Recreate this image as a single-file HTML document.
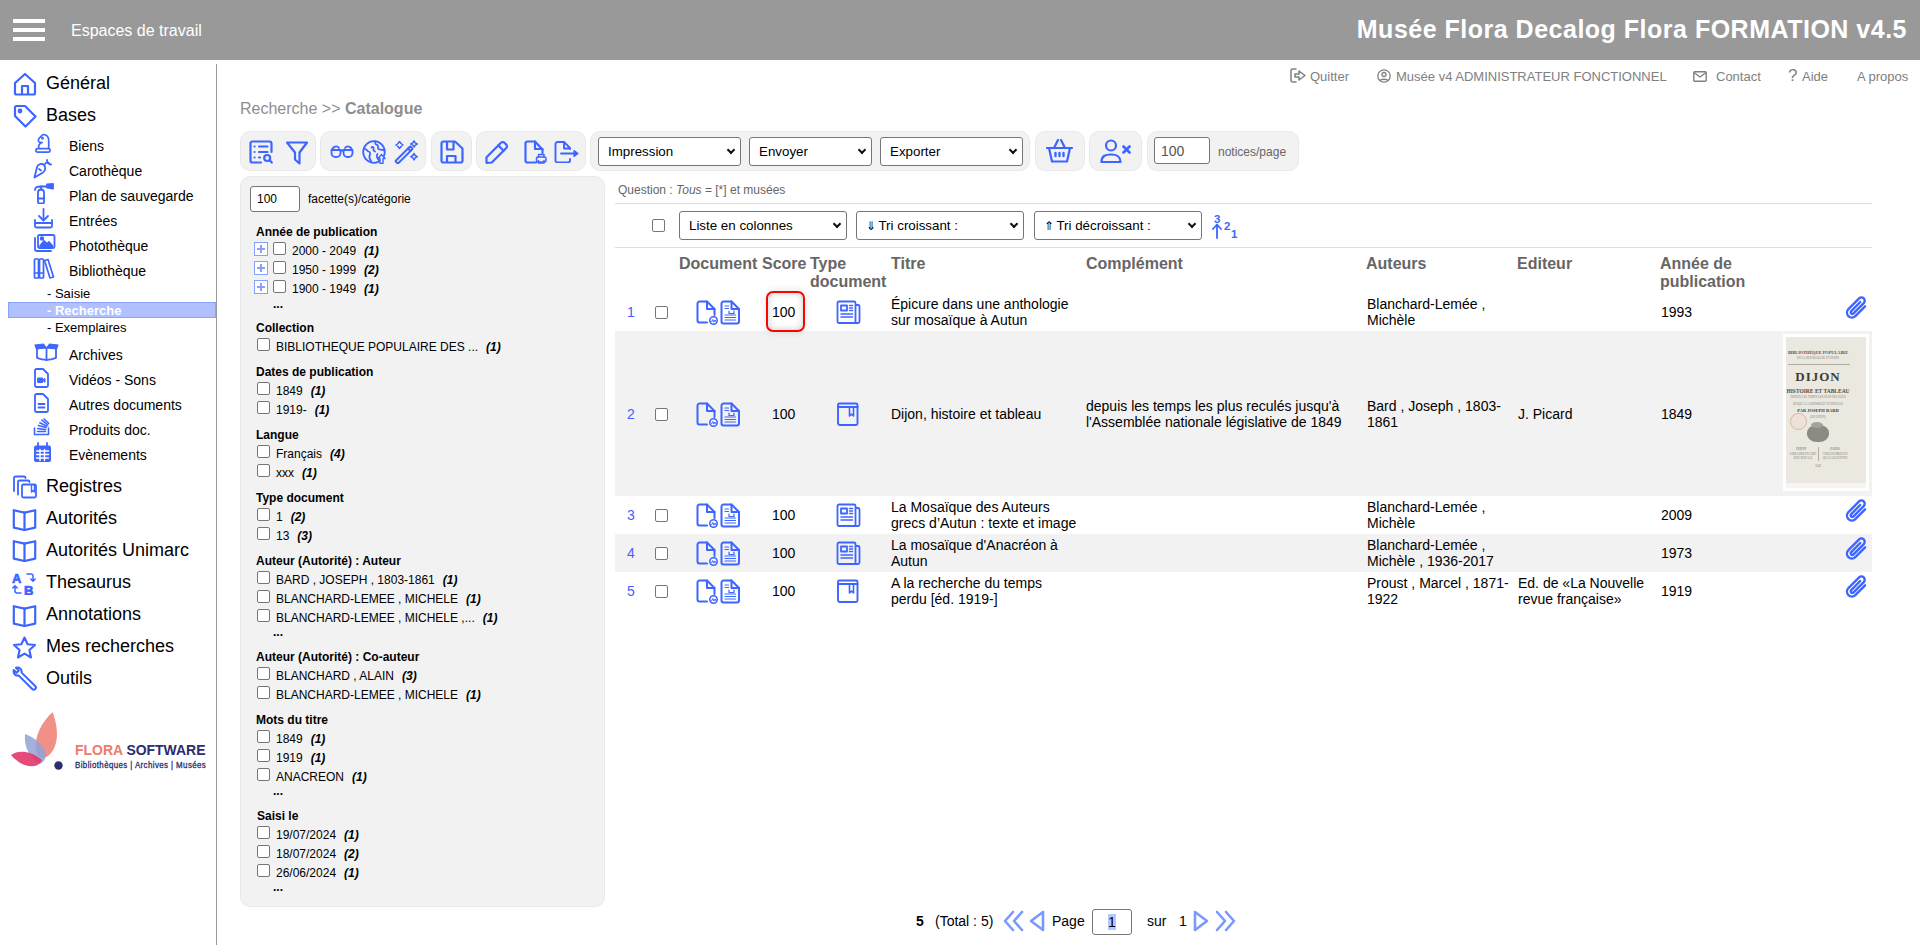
<!DOCTYPE html>
<html lang="fr"><head><meta charset="utf-8">
<style>
*{box-sizing:border-box;margin:0;padding:0}
html,body{width:1920px;height:945px;overflow:hidden;background:#fff;font-family:"Liberation Sans",sans-serif;color:#000}
.a{position:absolute}
svg.i{position:absolute;fill:none;stroke:#3d65ff;stroke-width:2;stroke-linecap:round;stroke-linejoin:round}
#hdr{position:absolute;left:0;top:0;width:1920px;height:60px;background:#999}
.bar{position:absolute;left:13px;width:32px;height:4px;background:#fff}
#side{position:absolute;left:0;top:60px;width:217px;height:885px}
#vline{position:absolute;left:216px;top:64px;width:1px;height:881px;background:#999}
.n1{position:absolute;left:46px;font-size:18px;white-space:nowrap}
.n2{position:absolute;left:69px;font-size:14px;white-space:nowrap}
.n3{position:absolute;left:47px;font-size:13px;white-space:nowrap}
.tl{position:absolute;top:69px;font-size:13px;color:#808080;white-space:nowrap}
.grp{position:absolute;top:131px;height:40px;background:#f2f2f2;border:1px solid #e9e9e9;border-radius:10px}
.sel{position:absolute;height:29px;border:1px solid #767676;border-radius:3px;background:#fff;font-size:13.333px;padding-left:9px;line-height:28px;white-space:nowrap}
.sel:after{content:"";position:absolute;right:6px;top:9px;width:6px;height:6px;box-sizing:border-box;border-right:2.4px solid #111;border-bottom:2.4px solid #111;transform:rotate(45deg)}
.inp{position:absolute;border:1px solid #767676;border-radius:3px;background:#fff;font-size:14px}
#facets{position:absolute;left:240px;top:176px;width:365px;height:731px;background:#f2f2f2;border:1px solid #e9e9e9;border-radius:10px}
.fh{position:absolute;left:256px;font-size:12px;font-weight:bold;white-space:nowrap}
.fi{position:absolute;font-size:12px;white-space:nowrap}
.fi i{font-weight:bold;margin-left:8px}
.cb{position:absolute;width:13px;height:13px;border:1px solid #767676;border-radius:2px;background:#fff}
.pl{position:absolute;width:14px;height:14px;border:1px solid #8aa0ff;background:#fff}
.pl:before{content:"";position:absolute;left:5px;top:2px;width:2px;height:8px;background:#8aa0ff}
.pl:after{content:"";position:absolute;left:2px;top:5px;width:8px;height:2px;background:#8aa0ff}

.hr{position:absolute;left:615px;width:1257px;height:1px;background:#e0e0e0}
.th{position:absolute;top:255px;font-size:16px;font-weight:bold;color:#666;line-height:18px;white-space:nowrap}
.td{position:absolute;font-size:14px;line-height:16px;white-space:nowrap}
.num{position:absolute;font-size:14px;color:#4b5cff;white-space:nowrap}
.band{position:absolute;left:615px;width:1257px;background:#f2f2f2}
</style></head><body>
<div id="hdr">
  <div class="bar" style="top:19px"></div><div class="bar" style="top:28px"></div><div class="bar" style="top:37px"></div>
  <div class="a" style="left:71px;top:22px;font-size:16px;color:#fff;white-space:nowrap">Espaces de travail</div>
  <div class="a" style="right:13px;top:15px;font-size:25px;font-weight:bold;color:#fff;white-space:nowrap;letter-spacing:0.5px">Musée Flora Decalog Flora FORMATION v4.5</div>
</div>
<div id="vline"></div>

<!-- sidebar -->
<div class="n1" style="top:73px">Général</div>
<div class="n1" style="top:105px">Bases</div>
<div class="n2" style="top:138px">Biens</div>
<div class="n2" style="top:163px">Carothèque</div>
<div class="n2" style="top:188px">Plan de sauvegarde</div>
<div class="n2" style="top:213px">Entrées</div>
<div class="n2" style="top:238px">Photothèque</div>
<div class="n2" style="top:263px">Bibliothèque</div>
<div class="n3" style="top:286px">- Saisie</div>
<div class="a" style="left:8px;top:302px;width:208px;height:16px;background:#b1c0ff;border:1px solid #8da2ff"></div>
<div class="n3" style="top:303px;color:#fff;font-weight:bold">- Recherche</div>
<div class="n3" style="top:320px">- Exemplaires</div>
<div class="n2" style="top:347px">Archives</div>
<div class="n2" style="top:372px">Vidéos - Sons</div>
<div class="n2" style="top:397px">Autres documents</div>
<div class="n2" style="top:422px">Produits doc.</div>
<div class="n2" style="top:447px">Evènements</div>
<div class="n1" style="top:476px">Registres</div>
<div class="n1" style="top:508px">Autorités</div>
<div class="n1" style="top:540px">Autorités Unimarc</div>
<div class="n1" style="top:572px">Thesaurus</div>
<div class="n1" style="top:604px">Annotations</div>
<div class="n1" style="top:636px">Mes recherches</div>
<div class="n1" style="top:668px">Outils</div>

<!-- top links -->
<div class="tl" style="left:1310px">Quitter</div>
<div class="tl" style="left:1396px">Musée v4 ADMINISTRATEUR FONCTIONNEL</div>
<div class="tl" style="left:1716px">Contact</div>
<div class="tl" style="left:1802px">Aide</div>
<div class="tl" style="left:1857px">A propos</div>

<div class="a" style="left:240px;top:100px;font-size:16px;color:#8e8e8e;white-space:nowrap">Recherche &gt;&gt; <b>Catalogue</b></div>

<!-- toolbar -->
<div class="grp" style="left:240px;width:76px"></div>
<div class="grp" style="left:320px;width:106px"></div>
<div class="grp" style="left:431px;width:41px"></div>
<div class="grp" style="left:476px;width:110px"></div>
<div class="grp" style="left:590px;width:440px"></div>
<div class="grp" style="left:1035px;width:50px"></div>
<div class="grp" style="left:1089px;width:53px"></div>
<div class="grp" style="left:1147px;width:152px"></div>
<div class="sel" style="left:598px;top:137px;width:143px">Impression</div>
<div class="sel" style="left:749px;top:137px;width:123px">Envoyer</div>
<div class="sel" style="left:880px;top:137px;width:143px">Exporter</div>
<div class="inp" style="left:1154px;top:137px;width:56px;height:27px;padding-left:6px;line-height:26px;color:#555">100</div>
<div class="a" style="left:1218px;top:145px;font-size:12px;color:#666">notices/page</div>

<!-- facets -->
<div id="facets"></div>

<!-- facets content -->
<div class="inp" style="left:250px;top:186px;width:50px;height:26px;padding-left:6px;line-height:24px;font-size:12px">100</div>
<div class="fi" style="left:308px;top:192px">facette(s)/catégorie</div>
<div class="fh" style="top:225px">Année de publication</div>
<div class="pl" style="left:254px;top:242px"></div>
<div class="cb" style="left:273px;top:242px"></div>
<div class="fi" style="left:292px;top:244px">2000 - 2049<i>(1)</i></div>
<div class="pl" style="left:254px;top:261px"></div>
<div class="cb" style="left:273px;top:261px"></div>
<div class="fi" style="left:292px;top:263px">1950 - 1999<i>(2)</i></div>
<div class="pl" style="left:254px;top:280px"></div>
<div class="cb" style="left:273px;top:280px"></div>
<div class="fi" style="left:292px;top:282px">1900 - 1949<i>(1)</i></div>
<div class="fi" style="left:273px;top:297px;font-weight:bold">...</div>
<div class="fh" style="top:321px">Collection</div>
<div class="cb" style="left:257px;top:338px"></div>
<div class="fi" style="left:276px;top:340px">BIBLIOTHEQUE POPULAIRE DES ...<i>(1)</i></div>
<div class="fh" style="top:365px">Dates de publication</div>
<div class="cb" style="left:257px;top:382px"></div>
<div class="fi" style="left:276px;top:384px">1849<i>(1)</i></div>
<div class="cb" style="left:257px;top:401px"></div>
<div class="fi" style="left:276px;top:403px">1919-<i>(1)</i></div>
<div class="fh" style="top:428px">Langue</div>
<div class="cb" style="left:257px;top:445px"></div>
<div class="fi" style="left:276px;top:447px">Français<i>(4)</i></div>
<div class="cb" style="left:257px;top:464px"></div>
<div class="fi" style="left:276px;top:466px">xxx<i>(1)</i></div>
<div class="fh" style="top:491px">Type document</div>
<div class="cb" style="left:257px;top:508px"></div>
<div class="fi" style="left:276px;top:510px">1<i>(2)</i></div>
<div class="cb" style="left:257px;top:527px"></div>
<div class="fi" style="left:276px;top:529px">13<i>(3)</i></div>
<div class="fh" style="top:554px">Auteur (Autorité) : Auteur</div>
<div class="cb" style="left:257px;top:571px"></div>
<div class="fi" style="left:276px;top:573px">BARD , JOSEPH , 1803-1861<i>(1)</i></div>
<div class="cb" style="left:257px;top:590px"></div>
<div class="fi" style="left:276px;top:592px">BLANCHARD-LEMEE , MICHELE<i>(1)</i></div>
<div class="cb" style="left:257px;top:609px"></div>
<div class="fi" style="left:276px;top:611px">BLANCHARD-LEMEE , MICHELE ,...<i>(1)</i></div>
<div class="fi" style="left:273px;top:625px;font-weight:bold">...</div>
<div class="fh" style="top:650px">Auteur (Autorité) : Co-auteur</div>
<div class="cb" style="left:257px;top:667px"></div>
<div class="fi" style="left:276px;top:669px">BLANCHARD , ALAIN<i>(3)</i></div>
<div class="cb" style="left:257px;top:686px"></div>
<div class="fi" style="left:276px;top:688px">BLANCHARD-LEMEE , MICHELE<i>(1)</i></div>
<div class="fh" style="top:713px">Mots du titre</div>
<div class="cb" style="left:257px;top:730px"></div>
<div class="fi" style="left:276px;top:732px">1849<i>(1)</i></div>
<div class="cb" style="left:257px;top:749px"></div>
<div class="fi" style="left:276px;top:751px">1919<i>(1)</i></div>
<div class="cb" style="left:257px;top:768px"></div>
<div class="fi" style="left:276px;top:770px">ANACREON<i>(1)</i></div>
<div class="fi" style="left:273px;top:784px;font-weight:bold">...</div>
<div class="fh" style="top:809px;left:257px">Saisi le</div>
<div class="cb" style="left:257px;top:826px"></div>
<div class="fi" style="left:276px;top:828px">19/07/2024<i>(1)</i></div>
<div class="cb" style="left:257px;top:845px"></div>
<div class="fi" style="left:276px;top:847px">18/07/2024<i>(2)</i></div>
<div class="cb" style="left:257px;top:864px"></div>
<div class="fi" style="left:276px;top:866px">26/06/2024<i>(1)</i></div>
<div class="fi" style="left:273px;top:880px;font-weight:bold">...</div>

<!-- results -->
<div class="a" style="left:618px;top:183px;font-size:12px;color:#666;white-space:nowrap">Question : <i>Tous</i> = [*] et musées</div>
<div class="hr" style="top:203px"></div>
<div class="cb" style="left:652px;top:219px"></div>
<div class="sel" style="left:679px;top:211px;width:168px;height:29px">Liste en colonnes</div>
<div class="sel" style="left:856px;top:211px;width:168px;height:29px"><span style="display:inline-block;width:9px;font-size:12px">⇓</span> Tri croissant :</div>
<div class="sel" style="left:1034px;top:211px;width:168px;height:29px"><span style="display:inline-block;width:9px;font-size:12px">⇑</span> Tri décroissant :</div>
<div class="hr" style="top:247px"></div>
<div class="th" style="left:679px">Document</div>
<div class="th" style="left:762px">Score</div>
<div class="th" style="left:810px">Type<br>document</div>
<div class="th" style="left:891px">Titre</div>
<div class="th" style="left:1086px">Complément</div>
<div class="th" style="left:1366px">Auteurs</div>
<div class="th" style="left:1517px">Editeur</div>
<div class="th" style="left:1660px">Année de<br>publication</div>

<div class="band" style="top:331px;height:165px"></div>
<div class="band" style="top:534px;height:38px"></div>
<div class="num" style="left:627px;top:304px">1</div>
<div class="cb" style="left:655px;top:306px"></div>
<div class="td" style="left:772px;top:304px">100</div>
<div class="td" style="left:891px;top:296px">Épicure dans une anthologie<br>sur mosaïque à Autun</div>
<div class="td" style="left:1367px;top:296px">Blanchard-Lemée ,<br>Michèle</div>
<div class="td" style="left:1661px;top:304px">1993</div>
<div class="num" style="left:627px;top:406px">2</div>
<div class="cb" style="left:655px;top:408px"></div>
<div class="td" style="left:772px;top:406px">100</div>
<div class="td" style="left:891px;top:406px">Dijon, histoire et tableau</div>
<div class="td" style="left:1086px;top:398px">depuis les temps les plus reculés jusqu'à<br>l'Assemblée nationale législative de 1849</div>
<div class="td" style="left:1367px;top:398px">Bard , Joseph , 1803-<br>1861</div>
<div class="td" style="left:1518px;top:406px">J. Picard</div>
<div class="td" style="left:1661px;top:406px">1849</div>
<div class="num" style="left:627px;top:507px">3</div>
<div class="cb" style="left:655px;top:509px"></div>
<div class="td" style="left:772px;top:507px">100</div>
<div class="td" style="left:891px;top:499px">La Mosaïque des Auteurs<br>grecs d’Autun : texte et image</div>
<div class="td" style="left:1367px;top:499px">Blanchard-Lemée ,<br>Michèle</div>
<div class="td" style="left:1661px;top:507px">2009</div>
<div class="num" style="left:627px;top:545px">4</div>
<div class="cb" style="left:655px;top:547px"></div>
<div class="td" style="left:772px;top:545px">100</div>
<div class="td" style="left:891px;top:537px">La mosaïque d'Anacréon à<br>Autun</div>
<div class="td" style="left:1367px;top:537px">Blanchard-Lemée ,<br>Michèle , 1936-2017</div>
<div class="td" style="left:1661px;top:545px">1973</div>
<div class="num" style="left:627px;top:583px">5</div>
<div class="cb" style="left:655px;top:585px"></div>
<div class="td" style="left:772px;top:583px">100</div>
<div class="td" style="left:891px;top:575px">A la recherche du temps<br>perdu [éd. 1919-]</div>
<div class="td" style="left:1367px;top:575px">Proust , Marcel , 1871-<br>1922</div>
<div class="td" style="left:1518px;top:575px">Ed. de «La Nouvelle<br>revue française»</div>
<div class="td" style="left:1661px;top:583px">1919</div>

<!-- score box -->
<div class="a" style="left:766px;top:291px;width:39px;height:41px;border:2px solid #ff0000;border-radius:7px;box-shadow:0 0 8px rgba(0,0,0,0.12),inset 0 0 7px rgba(0,0,0,0.22)"></div>
<!-- sort icon -->
<div class="a" style="left:1214px;top:214px;font-size:11.5px;font-weight:bold;color:#3d65ff;line-height:11px">3</div>
<div class="a" style="left:1224px;top:221px;font-size:11.5px;font-weight:bold;color:#3d65ff;line-height:11px">2</div>
<div class="a" style="left:1231px;top:229px;font-size:11.5px;font-weight:bold;color:#3d65ff;line-height:11px">1</div>
<svg class="i" style="left:1212px;top:223px;width:10px;height:16px;stroke-width:1.8" viewBox="0 0 10 16"><path d="M5 15 V2 M1 6 L5 1.5 L9 6"/></svg>
<!-- thumbnail -->
<div class="a" style="left:1783px;top:334px;width:86px;height:157px;background:#fff"></div>
<div class="a" style="left:1786px;top:337px;width:80px;height:151px;background:#ebe8e0;overflow:hidden;font-family:'Liberation Serif',serif;color:#55524c;text-align:center;white-space:nowrap">
  <div class="a" style="left:0;top:13px;width:64px;font-size:4.3px;font-weight:bold;line-height:6px">BIBLIOTHÈQUE POPULAIRE</div>
  <div class="a" style="left:0;top:19px;width:64px;font-size:3px;line-height:4px;color:#8a877f">DE LA BOURGOGNE ET DIJON</div>
  <div class="a" style="left:2px;top:27px;width:62px;height:1px;background:#b0ada5"></div>
  <div class="a" style="left:0;top:33px;width:64px;font-size:13px;font-weight:bold;letter-spacing:1px;color:#3e3c37;line-height:14px">DIJON</div>
  <div class="a" style="left:0;top:51px;width:64px;font-size:5.5px;font-weight:bold;line-height:6px;color:#4e4b45">HISTOIRE ET TABLEAU</div>
  <div class="a" style="left:0;top:58px;width:64px;font-size:3px;line-height:4px;color:#8a877f">DEPUIS LES TEMPS LES PLUS RECULÉS</div>
  <div class="a" style="left:0;top:65px;width:64px;font-size:3px;line-height:4px;color:#8a877f">JUSQU'A L'ASSEMBLÉE NATIONALE</div>
  <div class="a" style="left:0;top:71px;width:64px;font-size:4.5px;font-weight:bold;line-height:5px;color:#3e3c37">PAR JOSEPH BARD</div>
  <div class="a" style="left:0;top:78px;width:64px;font-size:3px;line-height:4px;color:#8a877f">(DE DIJON)</div>
  <div class="a" style="left:4px;top:76px;width:17px;height:17px;border-radius:50%;border:1px solid #dcb3ad;background:#ece2d9"></div>
  <div class="a" style="left:21px;top:88px;width:22px;height:17px;border-radius:45%;background:#8c8a83"></div>
  <div class="a" style="left:25px;top:85px;width:12px;height:6px;border-radius:50%;background:#a3a19a"></div>
  <div class="a" style="left:0;top:110px;width:30px;font-size:3.5px;line-height:4px;color:#6a675f">DIJON</div>
  <div class="a" style="left:34px;top:110px;width:30px;font-size:3.5px;line-height:4px;color:#6a675f">PARIS</div>
  <div class="a" style="left:2px;top:115px;width:30px;font-size:3px;line-height:4px;color:#8a877f">LIBRAIRIE PICARD</div>
  <div class="a" style="left:34px;top:115px;width:30px;font-size:3px;line-height:4px;color:#8a877f">CHEZ DUMOULIN</div>
  <div class="a" style="left:2px;top:119px;width:30px;font-size:3px;line-height:4px;color:#8a877f">RUE ROYALE</div>
  <div class="a" style="left:34px;top:119px;width:30px;font-size:3px;line-height:4px;color:#8a877f">QUAI AUGUSTINS</div>
  <div class="a" style="left:32px;top:110px;width:1px;height:14px;background:#aeaba3"></div>
  <div class="a" style="left:0;top:127px;width:64px;font-size:3px;line-height:4px;color:#8a877f">1849</div>
  <div class="a" style="left:0;top:146px;width:80px;height:5px;background:#f6f5f1"></div>
</div>
<!-- pagination -->
<div class="a" style="left:916px;top:913px;font-size:14px;font-weight:bold">5</div>
<div class="a" style="left:935px;top:913px;font-size:14px;white-space:nowrap">(Total : 5)</div>
<svg class="i" style="left:1003px;top:910px;width:22px;height:22px;stroke:#7b98ff;stroke-width:2.6" viewBox="0 0 22 22"><path d="M10 2 L2 11 L10 20 M19 2 L11 11 L19 20"/></svg>
<svg class="i" style="left:1029px;top:910px;width:16px;height:22px;stroke:#7b98ff;stroke-width:2.6" viewBox="0 0 16 22"><path d="M14 2 V20 L2 11 Z"/></svg>
<div class="a" style="left:1052px;top:913px;font-size:14px">Page</div>
<div class="inp" style="left:1092px;top:909px;width:40px;height:26px;text-align:center;line-height:24px"><span style="background:#b3c8ff">1</span></div>
<div class="a" style="left:1147px;top:913px;font-size:14px">sur</div>
<div class="a" style="left:1179px;top:913px;font-size:14px">1</div>
<svg class="i" style="left:1193px;top:910px;width:16px;height:22px;stroke:#7b98ff;stroke-width:2.6" viewBox="0 0 16 22"><path d="M2 2 V20 L14 11 Z"/></svg>
<svg class="i" style="left:1214px;top:910px;width:22px;height:22px;stroke:#7b98ff;stroke-width:2.6" viewBox="0 0 22 22"><path d="M3 2 L11 11 L3 20 M12 2 L20 11 L12 20"/></svg>
<!-- logo -->
<svg style="position:absolute;left:8px;top:708px;width:60px;height:64px" viewBox="0 0 60 64">
  <path d="M44.5 4 C34 14 26 28 28 42 C29 50 34 52 40 48 C50 40 52 24 44.5 4 Z" fill="#ef8a80" opacity="0.95"/>
  <path d="M17 26 C16 38 20 48 32 56 C40 52 40 42 30 34 C26 30 22 28 17 26 Z" fill="#8fa3d6" opacity="0.85"/>
  <path d="M3 47 C10 42 22 42 34 52 C30 62 14 60 3 47 Z" fill="#e2366a" opacity="0.9"/>
  <circle cx="50.5" cy="57.5" r="4.2" fill="#2b2d6e"/>
</svg>
<div class="a" style="left:75px;top:741px;font-size:15px;font-weight:bold;white-space:nowrap;transform:scaleX(0.93);transform-origin:0 0"><span style="color:#ef7a70">FLORA</span> <span style="color:#2b2d6e">SOFTWARE</span></div>
<div class="a" style="left:75px;top:760px;font-size:9px;font-weight:normal;color:#2b2d6e;white-space:nowrap;-webkit-text-stroke:0.3px #2b2d6e;letter-spacing:0.45px;transform:scaleX(0.88);transform-origin:0 0">Bibliothèques | Archives | Musées</div>
<!--ICONS-->
<svg class="i" style="left:13px;top:72px;width:24px;height:24px;stroke-width:2.2" viewBox="0 0 24 24"><path d="M2 11 L12 2 L22 11 V21 a1.5 1.5 0 0 1 -1.5 1.5 H3.5 A1.5 1.5 0 0 1 2 21 Z"/><path d="M9 22 V14 H15 V22"/></svg>
<svg class="i" style="left:13px;top:104px;width:24px;height:24px;stroke-width:2.2" viewBox="0 0 24 24"><path d="M2 3.5 a1.5 1.5 0 0 1 1.5 -1.5 H12 L22.5 12.5 L12.5 22.5 L2 12 Z"/><circle cx="7" cy="7" r="1.3"/></svg>
<svg class="i" style="left:34px;top:133px;width:18px;height:21px;stroke-width:1.8" viewBox="0 0 19 21"><path d="M5 15 C4.5 12.5 6 10.5 8.5 9.5 L5.5 9 C4.5 8.5 4.5 6.5 5 5.5 L8 2.5 C8.5 1.5 9 1 10 1 C13.5 1.2 15.5 4 15.5 7.5 V15"/><circle cx="9" cy="5" r="0.6" fill="#3d65ff"/><rect x="2" y="16" width="15" height="3.5" rx="1.7"/></svg>
<svg class="i" style="left:33px;top:158px;width:21px;height:21px;stroke-width:1.8" viewBox="0 0 21 21"><path d="M1.5 19.5 L4 9 C5 6 9 5 11 7 C13 9 12.5 13 10 14.5 Z"/><path d="M6 11 L8 12.5"/><path d="M14 2 C14 4 15 6 18 6.5" /><path d="M12 6 C13 4.5 14.5 4 16 5"/></svg>
<svg class="i" style="left:33px;top:183px;width:21px;height:21px;stroke-width:1.8" viewBox="0 0 21 21"><path d="M5 19 V9.5 a3 3 0 0 1 6 0 V19 a1.5 1.5 0 0 1 -1.5 1.5 h-3 A1.5 1.5 0 0 1 5 19 Z"/><path d="M5 15.5 H11"/><path d="M8 6.5 V3.5 H14"/><path d="M2 7 C2 4.5 4 3.5 8 3.5"/><path d="M14 1.5 L20 1 V5.5 L14 4.5 Z" fill="#3d65ff"/></svg>
<svg class="i" style="left:33px;top:208px;width:21px;height:21px;stroke-width:1.8" viewBox="0 0 21 21"><path d="M10.5 1 V12"/><path d="M6 8 L10.5 12.5 L15 8"/><path d="M2 12 V18 a1.5 1.5 0 0 0 1.5 1.5 H17.5 a1.5 1.5 0 0 0 1.5 -1.5 V12"/><path d="M2 15 H19"/></svg>
<svg class="i" style="left:33px;top:234px;width:23px;height:19px;stroke-width:1.8" viewBox="0 0 23 19"><path d="M2 4 V15 a2 2 0 0 0 2 2 H18"/><rect x="5" y="1" width="16.5" height="13" rx="1.5"/><path d="M7 12 L11 7 L14 10 L16 8 L19.5 12 Z" fill="#3d65ff"/><circle cx="9" cy="4.5" r="1.3" fill="#3d65ff"/></svg>
<svg class="i" style="left:33px;top:258px;width:22px;height:21px;stroke-width:1.7" viewBox="0 0 22 21"><rect x="1.5" y="1" width="4" height="19" rx="0.8"/><rect x="6.5" y="1" width="4" height="19" rx="0.8"/><path d="M11.5 2.5 L15 1.5 L20.5 19 L17 20 Z"/><path d="M1.5 15 H10.5"/></svg>
<svg class="i" style="left:34px;top:343px;width:25px;height:18px;stroke-width:1.8" viewBox="0 0 25 18"><path d="M1 2 L9.5 1 L12.5 5 L2.5 6 Z" fill="#3d65ff" stroke-width="1.2"/><path d="M24 2 L15.5 1 L12.5 5 L22.5 6 Z" fill="#3d65ff" stroke-width="1.2"/><path d="M3 6.5 V14.8 Q12.5 18.8 22 14.8 V6.5"/><path d="M12.5 5.5 V17.3"/></svg>
<svg class="i" style="left:33px;top:368px;width:17px;height:20px;stroke-width:1.8" viewBox="0 0 17 20"><path d="M2 2.5 a1.5 1.5 0 0 1 1.5 -1.5 H10 L15 6 V17.5 a1.5 1.5 0 0 1 -1.5 1.5 H3.5 A1.5 1.5 0 0 1 2 17.5 Z"/><path d="M5 10 H9.5 V14.5 H5 Z M9.5 12 L12 10.5 V14 Z" fill="#3d65ff" stroke-width="1"/></svg>
<svg class="i" style="left:33px;top:393px;width:17px;height:20px;stroke-width:1.8" viewBox="0 0 17 20"><path d="M2 2.5 a1.5 1.5 0 0 1 1.5 -1.5 H10 L15 6 V17.5 a1.5 1.5 0 0 1 -1.5 1.5 H3.5 A1.5 1.5 0 0 1 2 17.5 Z"/><path d="M5.5 11 H11.5 M5.5 14.5 H11.5"/></svg>
<svg class="i" style="left:33px;top:418px;width:17px;height:18px;stroke-width:1.6" viewBox="0 0 17 18"><path d="M1.5 10 V16.5 H15.5 V10"/><path d="M4.5 13.5 H12.5"/><path d="M4.7 10.5 L12.6 11.6"/><path d="M5.4 7.5 L13 9.6"/><path d="M6.8 4.8 L13.8 8.2"/><path d="M8.8 2.2 L14.8 7"/><path d="M11 1 L15.6 5.3"/></svg>
<svg class="i" style="left:33px;top:442px;width:19px;height:21px;stroke-width:1.8" viewBox="0 0 19 21"><rect x="1" y="3.5" width="17" height="16.5" rx="2" fill="#3d65ff" stroke="none"/><path d="M5 1 V4 M14 1 V4" /><path d="M3.5 9 H15.5 M3.5 12.5 H15.5 M3.5 16 H15.5 M7 7.5 V18.5 M11.5 7.5 V18.5" stroke="#fff" stroke-width="1.4"/></svg>
<svg class="i" style="left:12px;top:475px;width:26px;height:24px;stroke-width:1.8" viewBox="0 0 26 24"><path d="M2 16 V3 a1.5 1.5 0 0 1 1.5 -1.5 H12 a1.5 1.5 0 0 1 1.5 1.5"/><path d="M6 19.5 V7 a1.5 1.5 0 0 1 1.5 -1.5 H16 a1.5 1.5 0 0 1 1.5 1.5"/><rect x="10" y="9.5" width="14" height="13" rx="1.5"/><path d="M19.5 10 V17 L21 15.5 L22.5 17 V10" stroke-width="1.4"/></svg>
<svg class="i" style="left:12px;top:508px;width:25px;height:23px;stroke-width:2.2" viewBox="0 0 25 23"><path d="M1.8 2.2 L12.5 4.6 L23.2 2.2 V19.6 L12.5 22 L1.8 19.6 Z"/><path d="M12.5 4.6 V22"/></svg>
<svg class="i" style="left:12px;top:539px;width:25px;height:23px;stroke-width:2.2" viewBox="0 0 25 23"><path d="M1.8 2.2 L12.5 4.6 L23.2 2.2 V19.6 L12.5 22 L1.8 19.6 Z"/><path d="M12.5 4.6 V22"/></svg>
<svg class="i" style="left:12px;top:604px;width:25px;height:23px;stroke-width:2.2" viewBox="0 0 25 23"><path d="M1.8 2.2 L12.5 4.6 L23.2 2.2 V19.6 L12.5 22 L1.8 19.6 Z"/><path d="M12.5 4.6 V22"/></svg>
<svg class="i" style="left:12px;top:572px;width:25px;height:23px;" viewBox="0 0 25 23"><text x="0" y="10.5" font-family="Liberation Sans" font-weight="bold" font-size="13" fill="#3d65ff" stroke="#3d65ff" stroke-width="0.7">A</text><text x="12" y="22.5" font-family="Liberation Sans" font-weight="bold" font-size="13" fill="#3d65ff" stroke="#3d65ff" stroke-width="0.7">B</text><path d="M15 2 H19 a2 2 0 0 1 2 2 V9 M18.8 7 L21 9.2 L23.2 7" stroke-width="1.5"/><path d="M9 21 H5 a2 2 0 0 1 -2 -2 V14 M0.8 16 L3 13.8 L5.2 16" stroke-width="1.5"/></svg>
<svg class="i" style="left:12px;top:636px;width:25px;height:23px;stroke-width:2.1" viewBox="0 0 25 23"><path d="M12.5 1.5 L15.6 8.3 L23 9 L17.4 14 L19 21.5 L12.5 17.6 L6 21.5 L7.6 14 L2 9 L9.4 8.3 Z"/></svg>
<svg class="i" style="left:12px;top:666px;width:25px;height:25px;stroke-width:2" viewBox="0 0 25 25"><path d="M4 1.8 L6.8 4.6 L4.6 6.8 L1.8 4 C0.8 7.2 3.2 10.2 6.8 9.6 L20.2 23 a2.1 2.1 0 0 0 3 -3 L9.6 6.6 C10.2 3 7.2 0.8 4 1.8 Z"/></svg>
<svg class="i" style="left:1290px;top:68px;width:16px;height:15px;stroke:#808080;stroke-width:1.5" viewBox="0 0 16 15"><path d="M6 1 H2.5 a1.5 1.5 0 0 0 -1.5 1.5 V12.5 a1.5 1.5 0 0 0 1.5 1.5 H6"/><path d="M5 6 H9 V3 L15 7.5 L9 12 V9 H5 Z"/></svg>
<svg class="i" style="left:1377px;top:69px;width:14px;height:14px;stroke:#808080;stroke-width:1.3" viewBox="0 0 14 14"><circle cx="7" cy="7" r="6.2"/><circle cx="7" cy="5.5" r="2"/><path d="M3 11.6 C4 9.8 10 9.8 11 11.6"/></svg>
<svg class="i" style="left:1693px;top:71px;width:14px;height:11px;stroke:#808080;stroke-width:1.4" viewBox="0 0 14 11"><rect x="0.8" y="0.8" width="12.4" height="9.4" rx="1"/><path d="M1 1.5 L7 6 L13 1.5"/></svg>
<div class="a" style="left:1788px;top:66px;font-size:17px;color:#808080">?</div>
<svg class="i" style="left:249px;top:140px;width:24px;height:24px;stroke-width:2.2" viewBox="0 0 24 24"><path d="M12 22.5 H3.5 A2 2 0 0 1 1.5 20.5 V3.5 A2 2 0 0 1 3.5 1.5 H20.5 A2 2 0 0 1 22.5 3.5 V12"/><path d="M5.5 6.5 h0.1 M10 6.5 H18.5 M5.5 12 h0.1 M10 12 H18.5 M5.5 17.5 h0.1 M10 17.5 h1"/><circle cx="18.2" cy="18" r="3"/><path d="M20.5 20.3 L22.8 22.5"/></svg>
<svg class="i" style="left:286px;top:141px;width:22px;height:24px;stroke-width:2.2" viewBox="0 0 22 24"><path d="M1 1.5 H21 L13.5 11.5 V22.5 L9 18.5 V11.5 Z"/></svg>
<svg class="i" style="left:330px;top:145px;width:24px;height:13px;stroke-width:1.8" viewBox="0 0 24 13"><path d="M1.5 5 H10.5 V8 A4 4 0 0 1 6.5 12 H5.5 A4 4 0 0 1 1.5 8 Z"/><path d="M13.5 5 H22.5 V8 A4 4 0 0 1 18.5 12 H17.5 A4 4 0 0 1 13.5 8 Z"/><path d="M10.5 6 Q12 4.5 13.5 6"/><path d="M2 5 C3 1 7.5 0.5 9 3"/><path d="M22 5 C21 1 16.5 0.5 15 3"/></svg>
<svg class="i" style="left:362px;top:140px;width:24px;height:24px;stroke-width:1.8" viewBox="0 0 24 24"><circle cx="12" cy="12" r="10.8"/><path d="M2.5 8.5 C4.5 9 5 11 6.5 11.5 C8.5 12 8.5 14 7.5 16 C7 17.5 8 19.5 9 21" /><path d="M13.5 1.5 C12.5 3.5 14 5 15.5 5 C17 6 15 8 16.5 9 C18 10 20 9 22 10.5"/><path d="M9.5 7.5 C10.5 6.5 12 7 11.5 9 C11 10.5 12 11 13 11.5"/><path d="M17 20.5 C15 18 14 15 15.5 14"/><path d="M19.5 14.5 L23 18.5 H21 V23.5 H18 V18.5 H16 Z" fill="#f2f2f2" stroke-width="1.4"/></svg>
<svg class="i" style="left:394px;top:140px;width:25px;height:24px;stroke-width:2" viewBox="0 0 25 24"><path d="M2 20.5 L15.5 7 a1 1 0 0 1 1.4 0 L18 8.1 a1 1 0 0 1 0 1.4 L4.5 23 a1 1 0 0 1 -1.4 0 L2 21.9 a1 1 0 0 1 0 -1.4 Z"/><path d="M14 8.5 L16.5 11"/><path d="M5.5 1.5 L7 3.5 L9 5 L7 6.5 L5.5 8.5 L4 6.5 L2 5 L4 3.5 Z" stroke-width="1.5"/><path d="M20 0.8 L21.2 2.8 L23.2 4 L21.2 5.2 L20 7.2 L18.8 5.2 L16.8 4 L18.8 2.8 Z" stroke-width="1.5"/><path d="M20 13.5 L21.2 15.5 L23.2 16.7 L21.2 17.9 L20 19.9 L18.8 17.9 L16.8 16.7 L18.8 15.5 Z" stroke-width="1.5"/></svg>
<svg class="i" style="left:440px;top:140px;width:24px;height:24px;stroke-width:2.2" viewBox="0 0 24 24"><path d="M3.5 1.5 H15 L22.5 8.5 V20.5 A2 2 0 0 1 20.5 22.5 H3.5 A2 2 0 0 1 1.5 20.5 V3.5 A2 2 0 0 1 3.5 1.5 Z"/><path d="M7 2 V9.5 H13.5 V2"/><path d="M7 22 V16 H15.5 V22"/></svg>
<svg class="i" style="left:485px;top:140px;width:24px;height:24px;stroke-width:2.2" viewBox="0 0 24 24"><path d="M1.5 22.8 V17.2 L16 2.7 a2.4 2.4 0 0 1 3.4 0 L21.3 4.6 a2.4 2.4 0 0 1 0 3.4 L6.8 22.5 Z"/><path d="M13.3 5.4 L18.6 10.7"/></svg>
<svg class="i" style="left:524px;top:140px;width:23px;height:24px;stroke-width:2.2" viewBox="0 0 23 24"><path d="M12 22.5 H3.5 A2 2 0 0 1 1.5 20.5 V3.5 A2 2 0 0 1 3.5 1.5 H11 L18.5 9.5 V13"/><path d="M11 1.5 V9 H18.5"/><rect x="12.5" y="17" width="9.5" height="5" rx="1.5" stroke-width="1.5"/><path d="M14.5 17 V14.5 H20 V17 M14.5 20.5 V23 H20 V20.5" stroke-width="1.5"/></svg>
<svg class="i" style="left:554px;top:141px;width:25px;height:22px;stroke-width:1.9" viewBox="0 0 25 22"><path d="M16 18 V19.5 A2 2 0 0 1 14 21.5 H3.5 A2 2 0 0 1 1.5 19.5 V3 A2 2 0 0 1 3.5 1 H10 L16 7 V8"/><path d="M10 1 V7.5 H16"/><path d="M7 12.5 H22"/><path d="M20 9.5 L24 12.5 L20 15.5 Z" fill="#3d65ff" stroke-width="1.2"/></svg>
<svg class="i" style="left:1046px;top:139px;width:27px;height:24px;stroke-width:2.2" viewBox="0 0 27 24"><path d="M8 9 L12 1 M19 9 L15 1"/><path d="M1 9 H26"/><path d="M3 9 L6 22.5 H21 L24 9"/><path d="M9.5 14 V17 M13.5 14 V17 M17.5 14 V17" stroke-width="2.4"/></svg>
<svg class="i" style="left:1100px;top:139px;width:31px;height:24px;stroke-width:2.2" viewBox="0 0 31 24"><circle cx="11" cy="6.5" r="5"/><path d="M1.5 23 C1.5 17 5 15.5 11 15.5 C17 15.5 20.5 17 20.5 23 Z"/><path d="M23.5 7.5 L29.5 13.5 M29.5 7.5 L23.5 13.5" stroke-width="2.6"/></svg>
<svg class="i" style="left:696px;top:300px;width:23px;height:25px;stroke-width:2" viewBox="0 0 23 25"><path d="M11 22.5 H3.5 A2 2 0 0 1 1.5 20.5 V3.5 A2 2 0 0 1 3.5 1.5 H11 L18.5 9 V15"/><path d="M11 1.5 V9 H18.5"/><circle cx="17.5" cy="20.5" r="3.7" fill="#fff" stroke-width="1.6"/><path d="M15.6 21.8 L16.8 19.5 L17.8 21.8 M18 21.8 L19 20 L20 21.8" stroke-width="1"/></svg>
<svg class="i" style="left:720px;top:300px;width:21px;height:25px;stroke-width:2" viewBox="0 0 21 25"><path d="M3.5 1.5 H11.5 L19 9 V21.5 A2 2 0 0 1 17 23.5 H3.5 A2 2 0 0 1 1.5 21.5 V3.5 A2 2 0 0 1 3.5 1.5 Z"/><path d="M11.5 1.5 V9 H19"/><path d="M5 6 H8.5 M5 8.5 H8.5 M5 15 H15.5 M5 17.5 H15.5 M5 20 H15.5 M9 11 V13.5 H14 V11" stroke-width="1.2"/></svg>
<svg class="i" style="left:836px;top:300px;width:25px;height:25px;stroke-width:1.8" viewBox="0 0 25 25"><path d="M19.5 5 H22 a1.5 1.5 0 0 1 1.5 1.5 V21.5 a1.5 1.5 0 0 1 -1.5 1.5 H3 A1.5 1.5 0 0 1 1.5 21.5 V3 A1.5 1.5 0 0 1 3 1.5 H18 a1.5 1.5 0 0 1 1.5 1.5 V23"/><rect x="5" y="5.5" width="6" height="5"/><path d="M13.5 5.5 H16.5 M13.5 8 H16.5 M13.5 10.5 H16.5 M5 14 H16.5 M5 17 H16.5" stroke-width="1.5"/></svg>
<svg class="i" style="left:1844px;top:295px;width:27px;height:27px;stroke-width:2.2" viewBox="0 0 25 25"><path d="M19.5 10.5 L10.5 19.5 a4.5 4.5 0 0 1 -6.4 -6.4 L14 3.2 a3 3 0 0 1 4.3 4.3 L8.6 17.2 a1.5 1.5 0 0 1 -2.1 -2.1 L15 6.5"/></svg>
<svg class="i" style="left:696px;top:402px;width:23px;height:25px;stroke-width:2" viewBox="0 0 23 25"><path d="M11 22.5 H3.5 A2 2 0 0 1 1.5 20.5 V3.5 A2 2 0 0 1 3.5 1.5 H11 L18.5 9 V15"/><path d="M11 1.5 V9 H18.5"/><circle cx="17.5" cy="20.5" r="3.7" fill="#fff" stroke-width="1.6"/><path d="M15.6 21.8 L16.8 19.5 L17.8 21.8 M18 21.8 L19 20 L20 21.8" stroke-width="1"/></svg>
<svg class="i" style="left:720px;top:402px;width:21px;height:25px;stroke-width:2" viewBox="0 0 21 25"><path d="M3.5 1.5 H11.5 L19 9 V21.5 A2 2 0 0 1 17 23.5 H3.5 A2 2 0 0 1 1.5 21.5 V3.5 A2 2 0 0 1 3.5 1.5 Z"/><path d="M11.5 1.5 V9 H19"/><path d="M5 6 H8.5 M5 8.5 H8.5 M5 15 H15.5 M5 17.5 H15.5 M5 20 H15.5 M9 11 V13.5 H14 V11" stroke-width="1.2"/></svg>
<svg class="i" style="left:836px;top:402px;width:24px;height:25px;stroke-width:1.9" viewBox="0 0 24 25"><path d="M3 1.5 H20 a1.5 1.5 0 0 1 1.5 1.5 V21.5 a1.5 1.5 0 0 1 -1.5 1.5 H4 A2 2 0 0 1 2 21.5 V3 A1.5 1.5 0 0 1 3 1.5 Z"/><path d="M2 5 H21.5"/><path d="M13.5 5 V14 L15.5 12 L17.5 14 V5" stroke-width="1.6"/></svg>
<svg class="i" style="left:696px;top:503px;width:23px;height:25px;stroke-width:2" viewBox="0 0 23 25"><path d="M11 22.5 H3.5 A2 2 0 0 1 1.5 20.5 V3.5 A2 2 0 0 1 3.5 1.5 H11 L18.5 9 V15"/><path d="M11 1.5 V9 H18.5"/><circle cx="17.5" cy="20.5" r="3.7" fill="#fff" stroke-width="1.6"/><path d="M15.6 21.8 L16.8 19.5 L17.8 21.8 M18 21.8 L19 20 L20 21.8" stroke-width="1"/></svg>
<svg class="i" style="left:720px;top:503px;width:21px;height:25px;stroke-width:2" viewBox="0 0 21 25"><path d="M3.5 1.5 H11.5 L19 9 V21.5 A2 2 0 0 1 17 23.5 H3.5 A2 2 0 0 1 1.5 21.5 V3.5 A2 2 0 0 1 3.5 1.5 Z"/><path d="M11.5 1.5 V9 H19"/><path d="M5 6 H8.5 M5 8.5 H8.5 M5 15 H15.5 M5 17.5 H15.5 M5 20 H15.5 M9 11 V13.5 H14 V11" stroke-width="1.2"/></svg>
<svg class="i" style="left:836px;top:503px;width:25px;height:25px;stroke-width:1.8" viewBox="0 0 25 25"><path d="M19.5 5 H22 a1.5 1.5 0 0 1 1.5 1.5 V21.5 a1.5 1.5 0 0 1 -1.5 1.5 H3 A1.5 1.5 0 0 1 1.5 21.5 V3 A1.5 1.5 0 0 1 3 1.5 H18 a1.5 1.5 0 0 1 1.5 1.5 V23"/><rect x="5" y="5.5" width="6" height="5"/><path d="M13.5 5.5 H16.5 M13.5 8 H16.5 M13.5 10.5 H16.5 M5 14 H16.5 M5 17 H16.5" stroke-width="1.5"/></svg>
<svg class="i" style="left:1844px;top:498px;width:27px;height:27px;stroke-width:2.2" viewBox="0 0 25 25"><path d="M19.5 10.5 L10.5 19.5 a4.5 4.5 0 0 1 -6.4 -6.4 L14 3.2 a3 3 0 0 1 4.3 4.3 L8.6 17.2 a1.5 1.5 0 0 1 -2.1 -2.1 L15 6.5"/></svg>
<svg class="i" style="left:696px;top:541px;width:23px;height:25px;stroke-width:2" viewBox="0 0 23 25"><path d="M11 22.5 H3.5 A2 2 0 0 1 1.5 20.5 V3.5 A2 2 0 0 1 3.5 1.5 H11 L18.5 9 V15"/><path d="M11 1.5 V9 H18.5"/><circle cx="17.5" cy="20.5" r="3.7" fill="#fff" stroke-width="1.6"/><path d="M15.6 21.8 L16.8 19.5 L17.8 21.8 M18 21.8 L19 20 L20 21.8" stroke-width="1"/></svg>
<svg class="i" style="left:720px;top:541px;width:21px;height:25px;stroke-width:2" viewBox="0 0 21 25"><path d="M3.5 1.5 H11.5 L19 9 V21.5 A2 2 0 0 1 17 23.5 H3.5 A2 2 0 0 1 1.5 21.5 V3.5 A2 2 0 0 1 3.5 1.5 Z"/><path d="M11.5 1.5 V9 H19"/><path d="M5 6 H8.5 M5 8.5 H8.5 M5 15 H15.5 M5 17.5 H15.5 M5 20 H15.5 M9 11 V13.5 H14 V11" stroke-width="1.2"/></svg>
<svg class="i" style="left:836px;top:541px;width:25px;height:25px;stroke-width:1.8" viewBox="0 0 25 25"><path d="M19.5 5 H22 a1.5 1.5 0 0 1 1.5 1.5 V21.5 a1.5 1.5 0 0 1 -1.5 1.5 H3 A1.5 1.5 0 0 1 1.5 21.5 V3 A1.5 1.5 0 0 1 3 1.5 H18 a1.5 1.5 0 0 1 1.5 1.5 V23"/><rect x="5" y="5.5" width="6" height="5"/><path d="M13.5 5.5 H16.5 M13.5 8 H16.5 M13.5 10.5 H16.5 M5 14 H16.5 M5 17 H16.5" stroke-width="1.5"/></svg>
<svg class="i" style="left:1844px;top:536px;width:27px;height:27px;stroke-width:2.2" viewBox="0 0 25 25"><path d="M19.5 10.5 L10.5 19.5 a4.5 4.5 0 0 1 -6.4 -6.4 L14 3.2 a3 3 0 0 1 4.3 4.3 L8.6 17.2 a1.5 1.5 0 0 1 -2.1 -2.1 L15 6.5"/></svg>
<svg class="i" style="left:696px;top:579px;width:23px;height:25px;stroke-width:2" viewBox="0 0 23 25"><path d="M11 22.5 H3.5 A2 2 0 0 1 1.5 20.5 V3.5 A2 2 0 0 1 3.5 1.5 H11 L18.5 9 V15"/><path d="M11 1.5 V9 H18.5"/><circle cx="17.5" cy="20.5" r="3.7" fill="#fff" stroke-width="1.6"/><path d="M15.6 21.8 L16.8 19.5 L17.8 21.8 M18 21.8 L19 20 L20 21.8" stroke-width="1"/></svg>
<svg class="i" style="left:720px;top:579px;width:21px;height:25px;stroke-width:2" viewBox="0 0 21 25"><path d="M3.5 1.5 H11.5 L19 9 V21.5 A2 2 0 0 1 17 23.5 H3.5 A2 2 0 0 1 1.5 21.5 V3.5 A2 2 0 0 1 3.5 1.5 Z"/><path d="M11.5 1.5 V9 H19"/><path d="M5 6 H8.5 M5 8.5 H8.5 M5 15 H15.5 M5 17.5 H15.5 M5 20 H15.5 M9 11 V13.5 H14 V11" stroke-width="1.2"/></svg>
<svg class="i" style="left:836px;top:579px;width:24px;height:25px;stroke-width:1.9" viewBox="0 0 24 25"><path d="M3 1.5 H20 a1.5 1.5 0 0 1 1.5 1.5 V21.5 a1.5 1.5 0 0 1 -1.5 1.5 H4 A2 2 0 0 1 2 21.5 V3 A1.5 1.5 0 0 1 3 1.5 Z"/><path d="M2 5 H21.5"/><path d="M13.5 5 V14 L15.5 12 L17.5 14 V5" stroke-width="1.6"/></svg>
<svg class="i" style="left:1844px;top:574px;width:27px;height:27px;stroke-width:2.2" viewBox="0 0 25 25"><path d="M19.5 10.5 L10.5 19.5 a4.5 4.5 0 0 1 -6.4 -6.4 L14 3.2 a3 3 0 0 1 4.3 4.3 L8.6 17.2 a1.5 1.5 0 0 1 -2.1 -2.1 L15 6.5"/></svg>
<!--/ICONS-->
</body></html>
